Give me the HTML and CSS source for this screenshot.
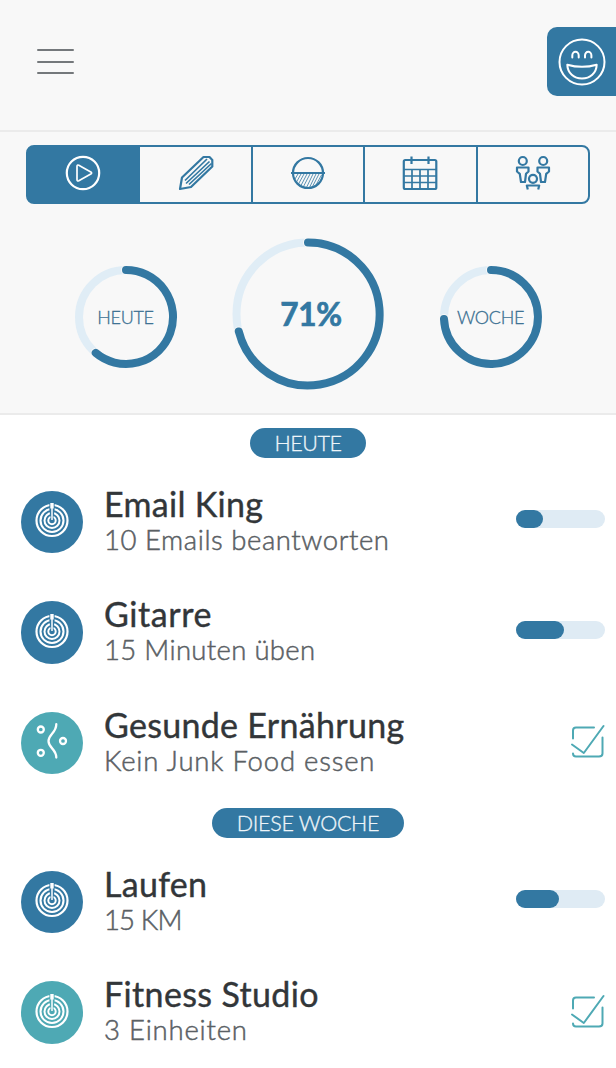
FILE: index.html
```html
<!DOCTYPE html>
<html lang="de">
<head>
<meta charset="utf-8">
<title>Ziele</title>
<link rel="stylesheet" href="styles.css">
</head>
<body>
<svg class="symbols" aria-hidden="true">
  <symbol id="target" viewBox="0 0 36 36">
    <g fill="none" stroke="#fff">
      <circle cx="18" cy="18.5" r="15.5" stroke-width="2.2"/>
      <circle cx="18" cy="18.5" r="11.5" stroke-width="2.1"/>
      <circle cx="18" cy="18.5" r="7.5" stroke-width="2"/>
      <circle cx="18" cy="18.5" r="3.7" stroke-width="2"/>
    </g>
    <path d="M15.400 1h5.200v7l-1.400 9.500h-2.400l-1.400-9.500z"/>
    <path d="M16.300 1h3.400v5.500h-3.400z" fill="#fff"/>
    <path d="M18 6v12" stroke="#fff" stroke-width="1.500"/>
  </symbol>
  <symbol id="check" viewBox="0 0 34 36">
    <g fill="none" stroke="#4ea9b4" stroke-width="2" stroke-linecap="round" stroke-linejoin="round">
      <path d="M23 4.500H5Q2 4.500 2 7.500V15.500M2 30.500Q2 33.500 5 33.500H28Q31.500 33.500 31.500 30.500V14.500"/>
      <path d="M1 21.500L12.800 30L32.500 3"/>
    </g>
  </symbol>
</svg>

<header class="header">
  <button class="menu" aria-label="Menü"><i></i><i></i><i></i></button>
  <div class="mood">
    <svg width="48" height="48" viewBox="0 0 48 48" fill="none" stroke="#fff" stroke-width="2" stroke-linecap="round" stroke-linejoin="round">
      <circle cx="24" cy="24" r="22.500"/>
      <path d="M14.300 19.500V17.500a3.200 3.700 0 0 1 6.400 0v2M27 19.500V17.500a3.200 3.700 0 0 1 6.400 0v2"/>
      <path d="M9.300 26.700Q24 31 38.700 26.700C38.500 35 32 40.500 24 40.500S9.500 35 9.300 26.700z"/>
    </svg>
  </div>
</header>

<section class="summary">
  <nav class="tabs">
    <a class="tab active">
      <svg width="36" height="36" viewBox="0 0 36 36"><circle cx="18" cy="18" r="16.200"/><path class="thin" d="M12 11.500Q12 9.400 13.800 10.300L25.800 16.900Q27.400 18 25.800 19.100L13.800 25.700Q12 26.600 12 24.500z"/></svg>
    </a>
    <a class="tab">
      <svg width="36" height="36" viewBox="0 0 36 36"><path d="M2 34L4 22.500L25.500 2H31.500L34.300 5V11.500L13 32z"/><path class="thin" d="M7 25.500L29 4M8 28.500L31.500 6.500M11 29.500L33.500 8.500"/></svg>
    </a>
    <a class="tab">
      <svg width="36" height="36" viewBox="0 0 36 36"><circle cx="18" cy="18" r="15"/><path d="M1 18H35"/><path class="hatch" d="M8 19L5 24M11 19L6.500 27M14 19L8.500 29M17 19L11 30.500M20 19L13.500 31.500M23 19L16.500 32.500M26 19L19.500 32.500M29 19L22.500 31.500M31.500 20L26 30"/></svg>
    </a>
    <a class="tab">
      <svg width="36" height="36" viewBox="0 0 36 36"><rect x="1.800" y="5" width="32.500" height="29" rx="1.500"/><path d="M9.500 1.500V9M26.500 1.500V9"/><path class="thin" d="M2 14.500H34M2 21H34M2 27.500H34M10 14.500V34M18 14.500V34M26 14.500V34"/></svg>
    </a>
    <a class="tab">
      <svg width="36" height="36" viewBox="0 0 36 36"><circle cx="7.800" cy="6" r="4"/><circle cx="28.200" cy="6" r="4"/><circle cx="18" cy="23.800" r="4"/><path d="M6 27L4.800 18.800L2 16.500V12.500H13.500V16.500L11 18.800L10 27zM26 27L25 18.800L22.500 16.500V12.500H34V16.500L31.200 18.800L30 27zM12.800 34.500L11.800 30.500H24.200L23.200 34.500"/></svg>
    </a>
  </nav>
  <div class="rings">
    <div class="ring small">
      <svg viewBox="0 0 104 104"><circle class="track" cx="52" cy="52" r="47"/><path class="gap" d="M52 5A47 47 0 1 1 21.700 87.900"/><path class="value" d="M52 5A47 47 0 1 1 21.700 87.900"/></svg>
      <span class="ring-label">HEUTE</span>
    </div>
    <div class="ring large">
      <svg viewBox="0 0 152 152"><circle class="track" cx="76" cy="76" r="71.500"/><path class="gap" d="M76 4.500A71.500 71.500 0 1 1 6.800 93.500"/><path class="value" d="M76 4.500A71.500 71.500 0 1 1 6.800 93.500"/></svg>
      <span class="ring-percent">71%</span>
    </div>
    <div class="ring small">
      <svg viewBox="0 0 104 104"><circle class="track" cx="52" cy="52" r="47"/><path class="gap" d="M52 5A47 47 0 1 1 5 54"/><path class="value" d="M52 5A47 47 0 1 1 5 54"/></svg>
      <span class="ring-label">WOCHE</span>
    </div>
  </div>
</section>

<main class="goals">
  <h2 class="pill">HEUTE</h2>
  <article class="goal">
    <div class="badge blue"><svg width="36" height="36"><use href="#target"/></svg></div>
    <div class="text"><h3 class="t1">Email King</h3><p class="s1">10 Emails beantworten</p></div>
    <div class="bar"><i style="width:27.5px"></i></div>
  </article>
  <article class="goal">
    <div class="badge blue"><svg width="36" height="36"><use href="#target"/></svg></div>
    <div class="text"><h3 class="t2">Gitarre</h3><p class="s2">15 Minuten üben</p></div>
    <div class="bar"><i style="width:48px"></i></div>
  </article>
  <article class="goal">
    <div class="badge teal">
      <svg width="36" height="36" viewBox="0 0 36 36" fill="none" stroke="#fff" stroke-width="2.300" stroke-linecap="round"><circle cx="6.800" cy="6.500" r="3"/><circle cx="6.800" cy="29.800" r="3"/><circle cx="29" cy="18" r="3"/><path d="M22.300 1.200C22.300 10 14.500 11 14.500 18S22.300 26 22.300 34.500"/></svg>
    </div>
    <div class="text"><h3 class="t3">Gesunde Ernährung</h3><p class="s3">Kein Junk Food essen</p></div>
    <svg class="check" width="34" height="36"><use href="#check"/></svg>
  </article>
  <h2 class="pill week">DIESE WOCHE</h2>
  <article class="goal">
    <div class="badge blue"><svg width="36" height="36"><use href="#target"/></svg></div>
    <div class="text"><h3 class="t4">Laufen</h3><p class="s4">15 KM</p></div>
    <div class="bar"><i style="width:43px"></i></div>
  </article>
  <article class="goal">
    <div class="badge teal"><svg width="36" height="36"><use href="#target"/></svg></div>
    <div class="text"><h3 class="t5">Fitness Studio</h3><p class="s5">3 Einheiten</p></div>
    <svg class="check" width="34" height="36"><use href="#check"/></svg>
  </article>
</main>
</body>
</html>
```
FILE: styles.css
```css
* { box-sizing: border-box; margin: 0; padding: 0; }
body { width: 616px; height: 1068px; overflow: hidden; background: #fff; font-family: Lato, sans-serif; color: #323639; }
.symbols { position: absolute; width: 0; height: 0; }
svg { display: block; flex: none; }

.header { height: 131.500px; background: #f8f8f8; border-bottom: 2px solid #ebebeb; display: flex; justify-content: space-between; align-items: flex-start; padding-top: 27px; }
.menu { width: 36.500px; margin: 22px 0 0 37px; background: none; border: 0; display: flex; flex-direction: column; gap: 9.500px; }
.menu i { display: block; height: 2px; border-radius: 1px; background: #74787b; }
.mood { width: 69px; height: 69px; border-radius: 10px 0 0 10px; background: #3378a2; padding: 11px 0 0 10.500px; }

.summary { height: 283.500px; background: #f8f8f8; border-bottom: 2px solid #ebebeb; padding: 13.500px 26px 0; }
.tabs { height: 59px; display: flex; border: 2px solid #3378a2; border-radius: 8px; background: linear-gradient(90deg, #3378a2 20px, #f8f8f8 20px) border-box; }
.tab { flex: 1; display: flex; align-items: center; justify-content: center; border-left: 2px solid #3378a2; }
.tab:first-child { border-left: 0; }
.tab.active { background: #3378a2; border-radius: 6px 0 0 6px; }
.tab svg { fill: none; stroke: #3378a2; stroke-width: 2.200; stroke-linejoin: round; margin-bottom: 3px; }
.tab.active svg { stroke: #fff; }
.tab svg .thin { stroke-width: 1.700; }
.tab svg .hatch { stroke-width: .8; }

.rings { display: flex; justify-content: space-between; align-items: center; padding: 0 47.500px 0 47.500px; margin-top: 33.500px; }
.ring { display: grid; place-items: center; }
.ring > * { grid-area: 1 / 1; }
.small { width: 104px; height: 104px; margin-top: 7px; }
.large { width: 152px; height: 152px; }
.ring svg { width: 100%; height: 100%; fill: none; stroke-width: 8; stroke-linecap: round; }
.track { stroke: #e0edf6; }
.ring svg .gap { stroke: #f8f8f8; stroke-width: 10; }
.value { stroke: #3378a2; }
.ring-label { font-size: 18px; line-height: 24px; font-weight: 300; letter-spacing: -.3px; color: #396f91; -webkit-text-stroke: .3px #396f91; }
.ring-percent { font-size: 31.500px; line-height: 40px; font-weight: 700; letter-spacing: -.3px; color: #3378a2; -webkit-text-stroke: .7px #3378a2; padding-left: 6px; }

.goals { display: flex; flex-direction: column; padding-top: 13px; }
.pill { align-self: center; width: 115.500px; height: 30px; border-radius: 15px; background: #3378a2; color: #eef5f9; font-size: 21.500px; font-weight: 300; letter-spacing: -.5px; -webkit-text-stroke: .3px #eef5f9; line-height: 30px; text-align: center; margin-bottom: 8.750px; white-space: nowrap; }
.pill.week { width: 192px; margin-top: 9.750px; letter-spacing: -.3px; }
.goal { height: 110.500px; display: flex; align-items: center; padding: 0 11px 0 20.500px; }
.badge { flex: none; width: 62.500px; height: 62.500px; border-radius: 50%; display: grid; place-items: center; padding-bottom: 4px; }
.blue { background: #3378a2; fill: #3378a2; }
.teal { background: #4ea9b4; fill: #4ea9b4; }
.badge svg[fill="none"] { fill: none; }
.text { flex: 1; padding: 0 0 2px 21px; white-space: nowrap; }
.text h3 { font-size: 34px; line-height: 36px; font-weight: 400; -webkit-text-stroke: .4px #323639; margin-bottom: 1px; }
.text p { font-size: 27.500px; line-height: 34px; font-weight: 300; color: #5a6064; -webkit-text-stroke: .5px #5a6064; }
.t1 { letter-spacing: .3px; }
.t2 { letter-spacing: .6px; }
.t3 { letter-spacing: .3px; }
.t4 { letter-spacing: .3px; }
.t5 { letter-spacing: .35px; }
.s1 { letter-spacing: .57px; }
.s2 { letter-spacing: .33px; }
.s3 { letter-spacing: .8px; }
.s4 { letter-spacing: -.85px; }
.s5 { letter-spacing: .8px; }
.bar { width: 89.500px; height: 18px; border-radius: 9px; background: #dfebf4; margin-bottom: 6px; }
.bar i { display: block; height: 100%; border-radius: 9px; background: #3378a2; }
.check { margin-bottom: 4px; }
```
